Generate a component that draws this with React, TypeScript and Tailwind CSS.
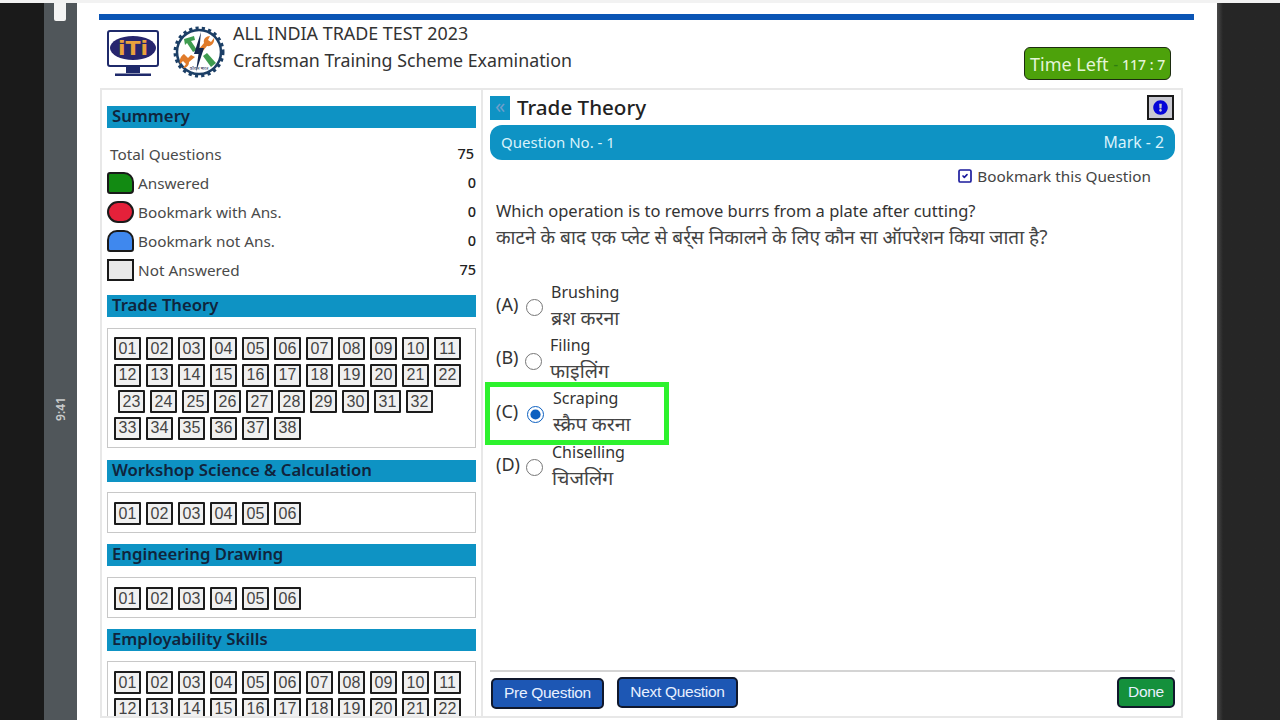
import React from 'react';
import { FaExclamationCircle } from 'react-icons/fa';
import { SquareCheck } from 'lucide-react';

const sans = { fontFamily: '"Noto Sans", sans-serif' };

const nums = (from: number, to: number) => {
  const out: string[] = [];
  for (let i = from; i <= to; i++) out.push(String(i).padStart(2, '0'));
  return out;
};

function Chip({ n }: { n: string }) {
  return (
    <span className="w-[27px] h-[23px] border-2 border-[#1c1c1c] rounded-[1px] bg-[#f0f0f0] flex items-center justify-center text-[16px] text-[#444] font-['Liberation_Sans',sans-serif]">
      {n}
    </span>
  );
}

function ChipRow({ items, className = '' }: { items: string[]; className?: string }) {
  return (
    <div className={`flex gap-[5px] ${className}`}>
      {items.map((n) => (
        <Chip key={n} n={n} />
      ))}
    </div>
  );
}

function SectionBar({ title }: { title: string }) {
  return (
    <div className="h-[22px] bg-[#0e93c4] pl-[5px] pb-[2px] flex items-center text-[16.7px] font-semibold text-[#10243c] leading-none">
      {title}
    </div>
  );
}

function LegendRow({ label, value, shape }: { label: string; value: string; shape: string }) {
  return (
    <div className="h-[29px] flex items-center text-[15.3px] text-[#4a4a4a]">
      <span className={`w-[27px] h-[22px] border-2 border-[#1a1a1a] ${shape}`} />
      <span className="ml-[4px] mt-[1px]">{label}</span>
      <span className="ml-auto font-medium text-[#222] text-[14.5px]">{value}</span>
    </div>
  );
}

function ItiLogo() {
  return (
    <svg width="52" height="48" viewBox="0 0 52 48">
      <rect x="1" y="1" width="50" height="35" rx="2" fill="#fff" stroke="#1f2a6b" strokeWidth="2" />
      <ellipse cx="26" cy="18" rx="23" ry="12" fill="#27266e" />
      <text x="26" y="25" textAnchor="middle" fontSize="19" fontWeight="700" fill="#eaa23c" fontFamily="DejaVu Sans, sans-serif" textLength="30" lengthAdjust="spacingAndGlyphs">iTi</text>
      <rect x="19" y="36" width="14" height="7" fill="#1f2a6b" />
      <rect x="8" y="43.5" width="36" height="2.5" fill="#1f2a6b" />
    </svg>
  );
}

function GearLogo() {
  return (
    <svg width="52" height="52" viewBox="0 0 52 52">
      <circle cx="26" cy="26" r="22" fill="#fff" stroke="#1c3f66" strokeWidth="2.5" />
      <circle cx="26" cy="26" r="24" fill="none" stroke="#1c3f66" strokeWidth="3" strokeDasharray="3.2 3.2" />
      <path d="M11 13 L21 10 L22 14 L18 15 L24 24 L20 26 L14 17 L12 19 Z" fill="#3e9c4f" />
      <path d="M41 12 L38 16 L35 14 L37 10 C33 10 30 13 31 17 L26 23 L29 26 L34 20 C38 21 42 17 41 12 Z" fill="#e07b2a" />
      <path d="M11 28 L15 32 L18 29 L22 31 L16 36 C16 40 13 42 10 42 L13 38 L10 35 L7 38 C6 33 8 30 11 28 Z" fill="#e07b2a" />
      <path d="M30 30 L34 27 L43 37 L38 41 Z" fill="#3e9c4f" />
      <path d="M28 6 L21 28 L25.5 28 L23 46 L31 22 L26.5 22 Z" fill="#14284f" />
      <text x="26" y="44" textAnchor="middle" fontSize="4" fill="#14284f" fontFamily="Noto Sans, sans-serif">कौशल भारत</text>
    </svg>
  );
}

function Option({ tag, en, hi, radioMl, textMl, tagMt, checked, boxed }: { tag: string; en: string; hi: string; radioMl: string; textMl: string; tagMt: string; checked?: boolean; boxed?: boolean }) {
  return (
    <div className={`h-[53.4px] flex items-center ${boxed ? 'w-[174px] -ml-[6px] pl-[6px] outline-[5px] outline-[#2df22d] bg-white' : ''}`}>
      <span className={`text-[18px] text-[#333] w-[30px] ${tagMt}`}>{tag}</span>
      <input type="radio" name="opt" defaultChecked={checked} className={`w-[17px] h-[17px] mt-[2px] accent-[#0b5fc0] ${radioMl}`} />
      <div className={`flex flex-col text-[16px] text-[#333] leading-[26px] -mt-[4px] ${textMl}`}>
        <span>{en}</span>
        <span className="text-[19.5px] text-[#444]">{hi}</span>
      </div>
    </div>
  );
}

function NavButton({ label, className }: { label: string; className: string }) {
  return (
    <button className={`h-[31px] pb-[2px] border-2 border-[#10182c] rounded-[5px] text-[15.5px] tracking-[-0.3px] text-[#e8f0ff] font-['Liberation_Sans',sans-serif] ${className}`}>
      {label}
    </button>
  );
}

export default function App() {
  return (
    <div style={sans} className="w-[1280px] h-[720px] overflow-hidden bg-white flex flex-col">
      <div className="h-[3px] bg-[#f2f2f2]" />
      <div className="flex flex-1 min-h-0">
        <div className="w-[44px] bg-[#1a1a1a]" />
        <div className="w-[33px] bg-[#50565a] flex flex-col items-center">
          <div className="w-[12px] h-[18px] bg-[#f4f4f4] rounded-b-[2px] -ml-[1px]" />
          <span className="mt-[379px] -rotate-90 text-[12px] font-semibold text-[#c9cccc]">9:41</span>
        </div>

        <div className="w-[1140px] bg-white pl-[22px] pb-[2px] flex flex-col min-h-0">
          <div className="w-[1095px] h-[6px] bg-[#0b55b5] mt-[11px]" />

          <div className="h-[68px] flex w-[1072px]">
            <div className="ml-[8px] mt-[10px]"><ItiLogo /></div>
            <div className="ml-[14px] mt-[6px]"><GearLogo /></div>
            <div className="ml-[8px] text-[#333] flex flex-col">
              <span className="text-[17.9px] leading-[27px]">ALL INDIA TRADE TEST 2023</span>
              <span className="text-[17.8px] leading-[26px]">Craftsman Training Scheme Examination</span>
            </div>
            <div className="ml-auto mt-[27px] w-[147px] h-[33px] bg-[#4da20b] border border-[#1c2c10] rounded-[6px] flex items-center pl-[5px] pt-[2px] text-[#e4f5d8]">
              <span className="text-[18px]">Time Left</span>
              <span className="text-[14px] font-medium ml-[5px]"><span className="text-[#2f7d10] mr-[4px]">-</span>117 : 7</span>
            </div>
          </div>

          <div className="flex w-[1083px] flex-1 min-h-0 ml-[1px] border-2 border-[#e8e8e8] overflow-hidden">
            <div className="w-[381px] border-r-2 border-[#e8e8e8] px-[5px] pt-[16px] overflow-hidden shrink-0">
              <SectionBar title="Summery" />
              <div className="h-[38px] pt-[14px] flex items-center justify-between pl-[3px] pr-[2px] text-[15.3px] text-[#4a4a4a]">
                <span>Total Questions</span>
                <span className="font-medium text-[#222] text-[14.5px]">75</span>
              </div>
              <div className="mt-[2px]">
                <LegendRow label="Answered" value="0" shape="bg-[#128a12] rounded-tr-[10px] rounded-br-[4px] rounded-tl-[3px] rounded-bl-[3px]" />
                <LegendRow label="Bookmark with Ans." value="0" shape="bg-[#e4213a] rounded-full" />
                <LegendRow label="Bookmark not Ans." value="0" shape="bg-[#3f88ee] rounded-t-[10px] rounded-b-[3px]" />
                <LegendRow label="Not Answered" value="75" shape="bg-[#e8e8e8]" />
              </div>

              <div className="mt-[11px]"><SectionBar title="Trade Theory" /></div>
              <div className="mt-[11px] h-[120px] border border-[#c8c8c8] pl-[6px] pt-[8px] flex flex-col gap-[3.5px]">
                <ChipRow items={nums(1, 11)} />
                <ChipRow items={nums(12, 22)} />
                <ChipRow items={nums(23, 32)} className="ml-[4px]" />
                <ChipRow items={nums(33, 38)} />
              </div>

              <div className="mt-[12px]"><SectionBar title="Workshop Science & Calculation" /></div>
              <div className="mt-[10px] h-[41px] border border-[#c8c8c8] pl-[6px] pt-[9px]">
                <ChipRow items={nums(1, 6)} />
              </div>

              <div className="mt-[11px]"><SectionBar title="Engineering Drawing" /></div>
              <div className="mt-[11px] h-[41px] border border-[#c8c8c8] pl-[6px] pt-[9px]">
                <ChipRow items={nums(1, 6)} />
              </div>

              <div className="mt-[11px]"><SectionBar title="Employability Skills" /></div>
              <div className="mt-[10px] h-[100px] border border-[#c8c8c8] pl-[6px] pt-[9px] flex flex-col gap-[3.5px]">
                <ChipRow items={nums(1, 11)} />
                <ChipRow items={nums(12, 22)} />
              </div>
            </div>

            <div className="flex-1 min-w-0 pl-[7px] pr-[6px] pt-[5px] flex flex-col">
              <div className="h-[25px] flex items-center">
                <div className="w-[20px] h-[24px] bg-[#0e93c4] flex items-center justify-center text-[20px] text-[#6f9fcb] leading-none pb-[3px]">«</div>
                <span className="ml-[7px] text-[20.6px] font-medium text-[#222]">Trade Theory</span>
                <div className="ml-auto mr-[1px] w-[27px] h-[25px] bg-[#c9c9d1] border-2 border-[#1a1a1a] flex items-center justify-center">
                  <FaExclamationCircle className="text-[#0505d8] text-[15px]" />
                </div>
              </div>
              <div className="mt-[5px] h-[35px] pb-[1px] bg-[#0e93c4] rounded-[12px] flex items-center justify-between px-[11px] text-[15px] leading-[20px] text-[#d8f2fb]">
                <span>Question No. - 1</span>
                <span className="text-[15.8px]">Mark - 2</span>
              </div>
              <div className="h-[32px] flex items-center justify-end pr-[24px] text-[15.3px] text-[#444]">
                <SquareCheck size={16} strokeWidth={2.5} className="text-[#1a1a9c] mr-[4px]" />
                <span>Bookmark this Question</span>
              </div>
              <div className="mt-[6px] pl-[6px] text-[16.5px] leading-[26px] text-[#333]">
                <div>Which operation is to remove burrs from a plate after cutting?</div>
                <div className="text-[19px] text-[#444]">काटने के बाद एक प्लेट से बर्र्स निकालने के लिए कौन सा ऑपरेशन किया जाता है?</div>
              </div>

              <div className="mt-[30px] pl-[6px] flex flex-col">
                <Option tag="(A)" en="Brushing" hi="ब्रश करना" radioMl="" textMl="ml-[8px]" tagMt="-mt-[4px]" />
                <Option tag="(B)" en="Filing" hi="फाइलिंग" radioMl="-ml-[1px]" textMl="ml-[8px]" tagMt="-mt-[6px]" />
                <Option tag="(C)" en="Scraping" hi="स्क्रैप करना" radioMl="ml-[1px]" textMl="ml-[9px]" tagMt="-mt-[4px]" checked boxed />
                <Option tag="(D)" en="Chiselling" hi="चिजलिंग" radioMl="" textMl="ml-[9px]" tagMt="-mt-[4px]" />
              </div>

              <div className="mt-auto border-t-2 border-[#d4d4d4] h-[46px] flex items-start pt-[5px]">
                <NavButton label="Pre Question" className="w-[113px] bg-[#1d57b4] mt-[1px] ml-[1px]" />
                <NavButton label="Next Question" className="w-[121px] bg-[#1d57b4] ml-[13px]" />
                <NavButton label="Done" className="w-[58px] bg-[#14903c] ml-auto" />
              </div>
            </div>
          </div>
        </div>

        <div className="flex-1 bg-[#262626] bg-gradient-to-r from-[#4a4a4a] to-[#262626] to-[6px]" />
      </div>
    </div>
  );
}
